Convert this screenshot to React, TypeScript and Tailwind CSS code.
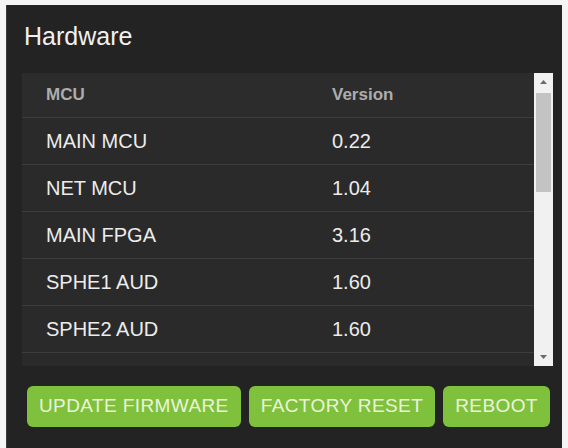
import React from 'react';

// Model
const firmware = [
  { mcu: 'MAIN MCU', version: '0.22' },
  { mcu: 'NET MCU', version: '1.04' },
  { mcu: 'MAIN FPGA', version: '3.16' },
  { mcu: 'SPHE1 AUD', version: '1.60' },
  { mcu: 'SPHE2 AUD', version: '1.60' },
];

const actions = ['UPDATE FIRMWARE', 'FACTORY RESET', 'REBOOT'];

// Scrollbar
const Arrow = ({ up }: { up?: boolean }) => (
  <svg width="9" height="6" viewBox="0 0 9 6">
    <path d={up ? 'M4.5 1 L8 5 L1 5 Z' : 'M4.5 5 L8 1 L1 1 Z'} fill="#6b6b6b" />
  </svg>
);

const ScrollBar = () => (
  <div className="flex w-[19px] flex-col bg-[#f1f1f1]">
    <div className="flex h-[20px] items-start justify-center pt-[6px]">
      <Arrow up />
    </div>
    <div className="mx-[2px] h-[99px] bg-[#c3c3c3]" />
    <div className="flex-1" />
    <div className="flex h-[20px] items-end justify-center pb-[6px]">
      <Arrow />
    </div>
  </div>
);

// View
export default function App() {
  return (
    <div className="h-[448px] w-[568px] bg-[#f4f4f4] pl-[6px] pr-[6px] pt-[5px] font-['Liberation_Sans',Arial,sans-serif]">
      <div className="flex h-[443px] flex-col border-l border-[#3a3a3a] bg-[#232323] pt-[19px]">
        <h2 className="ml-[17px] text-[25px] leading-[25px] text-[#f0f0f0]">Hardware</h2>

        <div className="ml-[15px] mr-[9px] mt-[24px] flex h-[293px] bg-[#2a2a2a]">
          <div className="flex-1 overflow-hidden">
            <div className="grid h-[45px] grid-cols-[310px_1fr] items-center border-b border-[#3c3c3c] bg-[#2c2c2c] text-[17px] font-bold text-[#adadad]">
              <span className="pl-[24px]">MCU</span>
              <span>Version</span>
            </div>
            {firmware.map((row) => (
              <div
                key={row.mcu}
                className="grid h-[47px] grid-cols-[310px_1fr] items-center border-b border-[#3c3c3c] text-[20px] text-[#ececec]"
              >
                <span className="pl-[24px]">{row.mcu}</span>
                <span>{row.version}</span>
              </div>
            ))}
          </div>
          <ScrollBar />
        </div>

        <div className="ml-[20px] mt-[20px] flex gap-[8px]">
          {actions.map((label) => (
            <button
              key={label}
              className="h-[41px] rounded-[6px] bg-[#7fc13d] px-[12px] text-[19px] tracking-[0.4px] text-[#e9f5d8]"
            >
              {label}
            </button>
          ))}
        </div>
      </div>
    </div>
  );
}
